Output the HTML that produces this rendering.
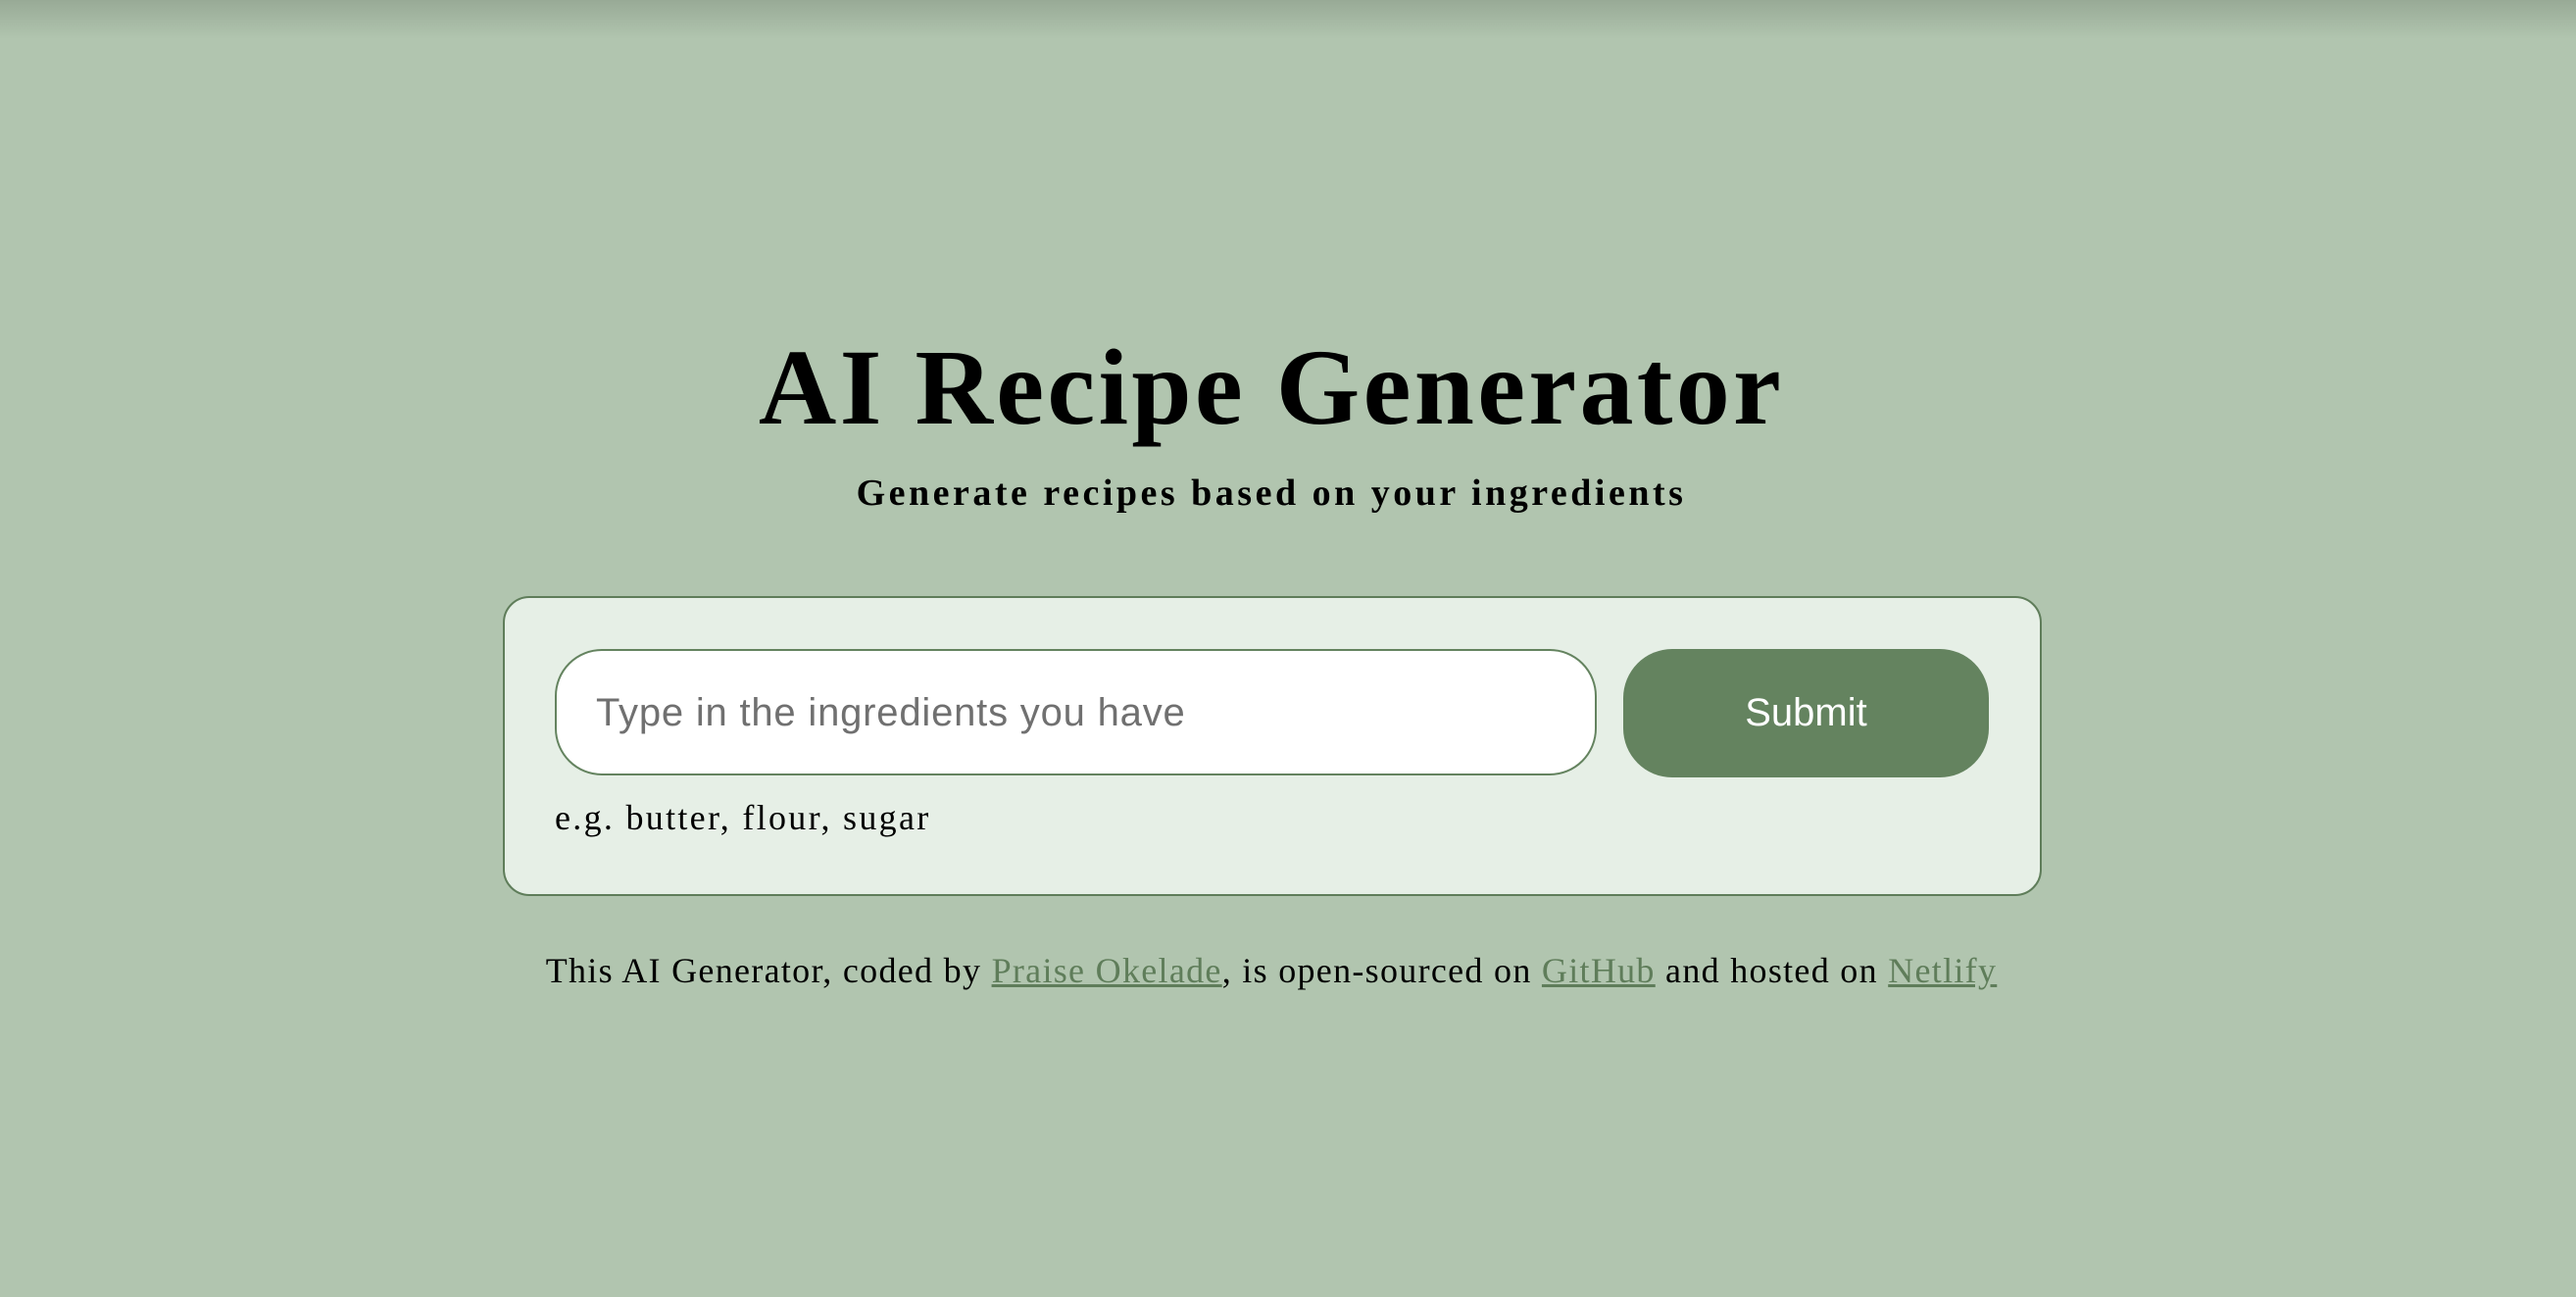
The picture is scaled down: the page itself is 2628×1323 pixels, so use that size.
<!DOCTYPE html>
<html><head><meta charset="utf-8"><style>
html,body{margin:0;padding:0}
body{width:2628px;height:1323px;background:#b1c5af;position:relative;overflow:hidden;font-family:"Liberation Serif",serif;color:#000}
.shadow{position:absolute;left:0;top:0;width:100%;height:40px;background:linear-gradient(#98aa96,#b1c5af)}
.t{position:absolute;left:0;width:2594px;text-align:center;white-space:nowrap}
h1{margin:0;font-size:110px;font-weight:bold;top:330px;line-height:130px;letter-spacing:3.3px}
.sub{font-size:38px;font-weight:bold;top:478px;line-height:50px;letter-spacing:3.5px}
.card{position:absolute;left:513px;top:608px;width:1566px;height:302px;background:#e6efe6;border:2px solid #5f7d5a;border-radius:27px;box-sizing:content-box}
.inp{position:absolute;left:566px;top:662px;width:1063px;height:129px;box-sizing:border-box;background:#fff;border:2px solid #64835f;border-radius:48px;font-family:"Liberation Sans",sans-serif;font-size:40px;color:#707070;line-height:127px;padding-left:40px;letter-spacing:0.8px}
.btn{position:absolute;left:1656px;top:662px;width:373px;height:131px;background:#64835f;border-radius:50px;color:#fff;font-family:"Liberation Sans",sans-serif;font-size:40px;text-align:center;line-height:131px}
.hint{position:absolute;left:566px;top:810px;font-size:36px;line-height:48px;letter-spacing:2.3px}
.foot{font-size:36px;top:966px;line-height:48px;letter-spacing:1.3px}
a{color:#5f7d5a;text-decoration:underline}
</style></head><body>
<div class="shadow"></div>
<h1 class="t">AI Recipe Generator</h1>
<div class="t sub">Generate recipes based on your ingredients</div>
<div class="card"></div>
<div class="inp">Type in the ingredients you have</div>
<div class="btn">Submit</div>
<div class="hint">e.g. butter, flour, sugar</div>
<div class="t foot">This AI Generator, coded by <a>Praise Okelade</a>, is open-sourced on <a>GitHub</a> and hosted on <a>Netlify</a></div>
</body></html>
